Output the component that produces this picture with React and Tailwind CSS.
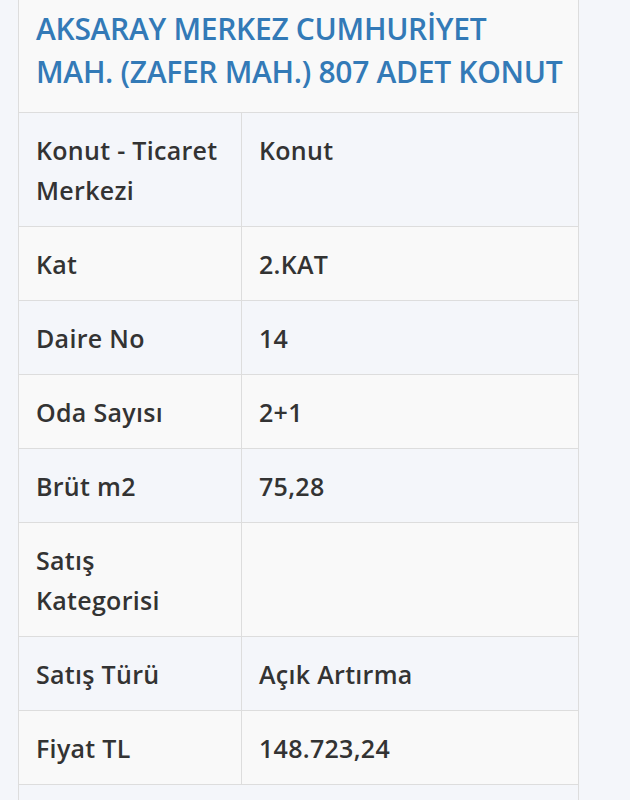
const rows = [
  { label: 'Konut - Ticaret Merkezi', value: 'Konut' },
  { label: 'Kat', value: '2.KAT' },
  { label: 'Daire No', value: '14' },
  { label: 'Oda Sayısı', value: '2+1' },
  { label: 'Brüt m2', value: '75,28' },
  { label: 'Satış Kategorisi', value: '' },
  { label: 'Satış Türü', value: 'Açık Artırma' },
  { label: 'Fiyat TL', value: '148.723,24' },
];

const App = () => {
  return (
    <div className="h-[800px] bg-[#f4f6fa] font-['Open_Sans',sans-serif] overflow-hidden">
      <div className="ml-[18px] w-[561px] border-x border-[#dddddd]">
        {/* Header */}
        <div className="bg-[#f9f9f9] border-b border-[#dddddd] pl-[17px] pr-[4px] pt-[7px] pb-[19px]">
          <h2 className="text-[30px] leading-[43px] font-semibold text-[#337ab7] tracking-[-0.3px] whitespace-nowrap">
            AKSARAY MERKEZ CUMHURİYET
            <br />
            MAH. (ZAFER MAH.) 807 ADET KONUT
          </h2>
        </div>

        {/* Details */}
        {rows.map((row, index) => (
          <div
            key={index}
            className={`grid grid-cols-[223px_1fr] border-b border-[#dddddd] text-[25px] leading-[40px] font-semibold tracking-[0.3px] text-[#333333] ${
              index % 2 === 0 ? 'bg-[#f4f6fa]' : 'bg-[#f9f9f9]'
            }`}
          >
            <div className="px-[17px] pt-[17px] pb-[16px] border-r border-[#dddddd] min-h-[73px]">{row.label}</div>
            <div className="px-[17px] pt-[17px] pb-[16px]">{row.value}</div>
          </div>
        ))}

        {/* Footer row */}
        <div className="h-[74px] bg-[#f4f6fa] border-b border-[#dddddd]" />
      </div>
    </div>
  );
};

export default App;
